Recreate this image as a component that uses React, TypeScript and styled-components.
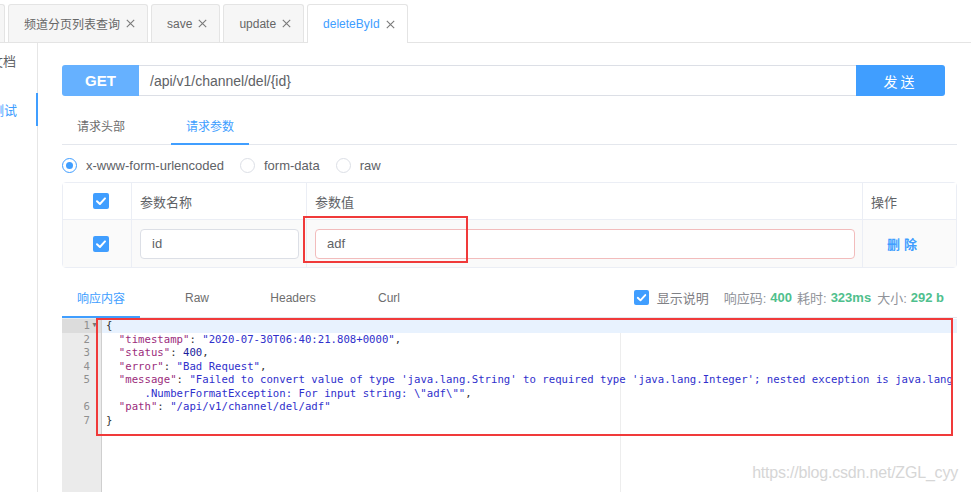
import React from "react";
import styled, { createGlobalStyle } from "styled-components";

const GlobalStyle = createGlobalStyle`
  html, body { margin: 0; padding: 0; background: #fff; }
  body { font-family: "Liberation Sans", "Noto Sans CJK SC", sans-serif; color: #606266; }
  * { box-sizing: border-box; }
`;

const Page = styled.div`
  width: 971px;
  height: 492px;
  overflow: hidden;
  position: relative;
  display: flex;
  flex-direction: column;
`;

const TabStrip = styled.div`
  height: 43px;
  flex: none;
  display: flex;
  align-items: flex-end;
  gap: 3px;
  border-bottom: 1px solid #e4e4e4;
`;

const DocTab = styled.div<{ $active?: boolean; $cut?: boolean }>`
  height: ${(p) => (p.$active ? 39 : 38)}px;
  margin-bottom: ${(p) => (p.$active ? -1 : 0)}px;
  margin-left: ${(p) => (p.$cut ? -95 : 0)}px;
  width: ${(p) => (p.$cut ? "100px" : "auto")};
  flex: none;
  display: flex;
  align-items: center;
  gap: 6px;
  padding: 0 12px 0 15px;
  border: 1px solid #e4e4e4;
  border-bottom: none;
  border-radius: 3px 3px 0 0;
  background: ${(p) => (p.$active ? "#fff" : "#f6f6f6")};
  color: ${(p) => (p.$active ? "#409eff" : "#666")};
  font-size: 12px;
  white-space: nowrap;
  overflow: hidden;
`;

const Body = styled.div`
  flex: 1;
  display: flex;
  min-height: 0;
`;

const Sidebar = styled.div`
  width: 38px;
  flex: none;
  border-right: 1px solid #e6e6e6;
  padding-top: 1px;
  display: flex;
  flex-direction: column;
  gap: 16px;
`;

const SideItem = styled.div<{ $active?: boolean }>`
  height: 33px;
  display: flex;
  align-items: center;
  justify-content: flex-end;
  padding-right: ${(p) => (p.$active ? 19 : 21)}px;
  margin-right: ${(p) => (p.$active ? -1 : 0)}px;
  overflow: hidden;
  white-space: nowrap;
  font-size: 13px;
  color: ${(p) => (p.$active ? "#409eff" : "#606266")};
  border-right: ${(p) => (p.$active ? "2px solid #409eff" : "none")};
`;

const Main = styled.div`
  flex: 1;
  min-width: 0;
  display: flex;
  flex-direction: column;
  padding: 0 14px 0 24px;
`;

const UrlBar = styled.div`
  margin-top: 22px;
  margin-right: 12px;
  height: 31px;
  flex: none;
  display: flex;
`;

const Method = styled.div`
  width: 77px;
  background: #66b1ff;
  color: #fff;
  font-weight: bold;
  font-size: 15px;
  border-radius: 3px 0 0 3px;
  display: flex;
  align-items: center;
  justify-content: center;
`;

const UrlInput = styled.div`
  flex: 1;
  border-top: 1px solid #dcdfe6;
  border-bottom: 1px solid #dcdfe6;
  padding-left: 11px;
  display: flex;
  align-items: center;
  font-size: 14px;
  color: #606266;
`;

const SendButton = styled.div`
  width: 89px;
  background: #409eff;
  color: #fff;
  font-size: 14px;
  letter-spacing: 3px;
  border-radius: 0 3px 3px 0;
  display: flex;
  align-items: center;
  justify-content: center;
`;

const TabBar = styled.div<{ $gap: number; $top: number; $pad: number }>`
  margin-top: ${(p) => p.$top}px;
  height: ${(p) => 35 + (p.$pad > 3 ? 1 : 0)}px;
  flex: none;
  display: flex;
  gap: ${(p) => p.$gap}px;
  border-bottom: 1px solid #e4e7ed;
`;

const TabItem = styled.div<{ $active?: boolean; $pad: number }>`
  width: 78px;
  position: relative;
  display: flex;
  align-items: center;
  justify-content: center;
  padding-bottom: ${(p) => p.$pad}px;
  font-size: 12px;
  color: ${(p) => (p.$active ? "#409eff" : "#6e6e6e")};
  &::after {
    content: "";
    display: ${(p) => (p.$active ? "block" : "none")};
    position: absolute;
    left: 0;
    right: 0;
    bottom: -1px;
    height: 2px;
    background: #409eff;
  }
`;

const RadioRow = styled.div`
  height: 37px;
  flex: none;
  padding-top: 3px;
  display: flex;
  align-items: center;
  font-size: 13px;
  color: #606266;
`;

const RadioOption = styled.label`
  display: flex;
  align-items: center;
  gap: 9px;
  margin-right: 16px;
`;

const RadioCircle = styled.span<{ $checked?: boolean }>`
  width: 15px;
  height: 15px;
  border-radius: 50%;
  border: 1px solid ${(p) => (p.$checked ? "#409eff" : "#dcdfe6")};
  display: flex;
  align-items: center;
  justify-content: center;
  &::after {
    content: "";
    width: 7px;
    height: 7px;
    border-radius: 50%;
    background: ${(p) => (p.$checked ? "#409eff" : "transparent")};
  }
`;

const Table = styled.div`
  position: relative;
  flex: none;
  border: 1px solid #ebeef5;
  border-radius: 4px;
`;

const TableRow = styled.div<{ $height: number; $shade?: boolean; $line?: boolean }>`
  display: grid;
  grid-template-columns: 69px 175px 1fr 93px;
  height: ${(p) => p.$height}px;
  background: ${(p) => (p.$shade ? "#fafafa" : "#fff")};
  border-bottom: ${(p) => (p.$line ? "1px solid #ebeef5" : "none")};
`;

const Cell = styled.div<{ $last?: boolean; $center?: boolean }>`
  display: flex;
  align-items: center;
  padding: 0 7px 0 8px;
  border-right: ${(p) => (p.$last ? "none" : "1px solid #ebeef5")};
  font-size: 13px;
  color: #606266;
`;

const CheckCell = styled(Cell)`
  padding-left: 30px;
`;

const CheckBox = styled.span<{ $size: number }>`
  width: ${(p) => p.$size}px;
  height: ${(p) => p.$size}px;
  border-radius: 2px;
  background: #409eff;
  display: inline-flex;
  align-items: center;
  justify-content: center;
  flex: none;
`;

const TextInput = styled.div<{ $error?: boolean }>`
  flex: 1;
  height: 30px;
  border: 1px solid ${(p) => (p.$error ? "#f2bcbc" : "#dcdfe6")};
  border-radius: 4px;
  background: #fff;
  padding-left: 11px;
  display: flex;
  align-items: center;
  font-size: 13px;
  color: #606266;
`;

const DeleteLink = styled.span`
  margin-left: 16px;
  color: #409eff;
  font-size: 13px;
  letter-spacing: 4px;
  font-weight: bold;
`;

const Mark = styled.div`
  position: absolute;
  border: 2px solid #f03a3a;
  pointer-events: none;
`;

const Stats = styled.div`
  margin-left: auto;
  display: flex;
  align-items: center;
  padding: 0 13px 4px 0;
  font-size: 13px;
  color: #909399;
`;

const StatLabel = styled.span<{ $gap: number }>`
  margin-left: ${(p) => p.$gap}px;
  color: ${(p) => (p.$gap === 8 ? "#7f8186" : "#909399")};
`;

const StatValue = styled.span`
  margin-left: 4px;
  color: #4fc08d;
  font-weight: bold;
`;

const Editor = styled.div`
  flex: 1;
  min-height: 0;
  position: relative;
  display: flex;
  font-family: "DejaVu Sans Mono", monospace;
  font-size: 10.67px;
  line-height: 13.5px;
`;

const Gutter = styled.div`
  width: 40px;
  flex: none;
  background: #ebebeb;
  border-right: 1px solid #cfcfcf;
  padding-top: 1px;
  color: #8f8f8f;
`;

const GutterCell = styled.div<{ $active?: boolean }>`
  height: 13.5px;
  display: flex;
  justify-content: flex-end;
  align-items: center;
  padding-right: 2px;
  background: ${(p) => (p.$active ? "#dcdcdc" : "transparent")};
`;

const Fold = styled.span`
  width: 9px;
  text-align: center;
  font-size: 7px;
  color: #777;
`;

const Code = styled.div`
  flex: 1;
  position: relative;
  padding-top: 1px;
  overflow: hidden;
  color: #333;
`;

const PrintMargin = styled.div`
  position: absolute;
  top: 0;
  bottom: 0;
  left: 518px;
  width: 1px;
  background: #ededed;
`;

const CodeLine = styled.div<{ $active?: boolean }>`
  position: relative;
  height: 13.5px;
  padding-left: 4px;
  white-space: pre;
  background: ${(p) => (p.$active ? "#e8f2fe" : "transparent")};
`;

const Tok = styled.span<{ $kind: string }>`
  color: ${(p) =>
    p.$kind === "k" ? "#9b2c7c" : p.$kind === "s" ? "#3030cc" : p.$kind === "n" ? "#1c1c9c" : "#333"};
`;

const Watermark = styled.div`
  position: absolute;
  right: 13px;
  bottom: 10px;
  font-size: 16px;
  letter-spacing: -0.2px;
  color: #d6d6d6;
  text-shadow: 0 0 1px rgba(255, 255, 255, 0.8);
`;

const CloseIcon = () => (
  <svg width="9" height="9" viewBox="0 0 9 9">
    <path d="M0.8 0.8 L8.2 8.2 M8.2 0.8 L0.8 8.2" stroke="#7a7a7a" strokeWidth="1.1" fill="none" />
  </svg>
);

const Check = ({ size }: { size: number }) => (
  <CheckBox $size={size}>
    <svg width={size} height={size} viewBox="0 0 16 16">
      <path d="M4 8.3 L6.9 11 L12 5.4" stroke="#fff" strokeWidth="2" fill="none" strokeLinecap="round" strokeLinejoin="round" />
    </svg>
  </CheckBox>
);

type Part = [string, string];
const codeLines: { n: number | null; parts: Part[] }[] = [
  { n: 1, parts: [["p", "{"]] },
  { n: 2, parts: [["p", "  "], ["k", '"timestamp"'], ["p", ": "], ["s", '"2020-07-30T06:40:21.808+0000"'], ["p", ","]] },
  { n: 3, parts: [["p", "  "], ["k", '"status"'], ["p", ": "], ["n", "400"], ["p", ","]] },
  { n: 4, parts: [["p", "  "], ["k", '"error"'], ["p", ": "], ["s", '"Bad Request"'], ["p", ","]] },
  {
    n: 5,
    parts: [
      ["p", "  "],
      ["k", '"message"'],
      ["p", ": "],
      ["s", "\"Failed to convert value of type 'java.lang.String' to required type 'java.lang.Integer'; nested exception is java.lang"],
    ],
  },
  { n: null, parts: [["p", "      "], ["s", '.NumberFormatException: For input string: \\"adf\\""'], ["p", ","]] },
  { n: 6, parts: [["p", "  "], ["k", '"path"'], ["p", ": "], ["s", '"/api/v1/channel/del/adf"']] },
  { n: 7, parts: [["p", "}"]] },
];

export default function App() {
  return (
    <Page>
      <GlobalStyle />
      <TabStrip>
        <DocTab $cut />
        <DocTab>
          频道分页列表查询 <CloseIcon />
        </DocTab>
        <DocTab>
          save <CloseIcon />
        </DocTab>
        <DocTab>
          update <CloseIcon />
        </DocTab>
        <DocTab $active>
          deleteById <CloseIcon />
        </DocTab>
      </TabStrip>
      <Body>
        <Sidebar>
          <SideItem>文档</SideItem>
          <SideItem $active>测试</SideItem>
        </Sidebar>
        <Main>
          <UrlBar>
            <Method>GET</Method>
            <UrlInput>/api/v1/channel/del/{"{id}"}</UrlInput>
            <SendButton>发送</SendButton>
          </UrlBar>
          <TabBar $gap={31} $top={14} $pad={3}>
            <TabItem $pad={3}>请求头部</TabItem>
            <TabItem $pad={3} $active>
              请求参数
            </TabItem>
          </TabBar>
          <RadioRow>
            <RadioOption>
              <RadioCircle $checked />
              x-www-form-urlencoded
            </RadioOption>
            <RadioOption>
              <RadioCircle />
              form-data
            </RadioOption>
            <RadioOption>
              <RadioCircle />
              raw
            </RadioOption>
          </RadioRow>
          <Table>
            <TableRow $height={37} $line>
              <CheckCell>
                <Check size={16} />
              </CheckCell>
              <Cell>参数名称</Cell>
              <Cell>参数值</Cell>
              <Cell $last>操作</Cell>
            </TableRow>
            <TableRow $height={47} $shade>
              <CheckCell>
                <Check size={16} />
              </CheckCell>
              <Cell>
                <TextInput>id</TextInput>
              </Cell>
              <Cell>
                <TextInput $error>adf</TextInput>
              </Cell>
              <Cell $last>
                <DeleteLink>删除</DeleteLink>
              </Cell>
            </TableRow>
            <Mark style={{ left: 240, top: 33, width: 165, height: 47 }} />
          </Table>
          <TabBar $gap={18} $top={14} $pad={4}>
            <TabItem $pad={4} $active>
              响应内容
            </TabItem>
            <TabItem $pad={4}>Raw</TabItem>
            <TabItem $pad={4}>Headers</TabItem>
            <TabItem $pad={4}>Curl</TabItem>
            <Stats>
              <Check size={15} />
              <StatLabel $gap={8}>显示说明</StatLabel>
              <StatLabel $gap={15}>响应码:</StatLabel>
              <StatValue>400</StatValue>
              <StatLabel $gap={5}>耗时:</StatLabel>
              <StatValue>323ms</StatValue>
              <StatLabel $gap={6}>大小:</StatLabel>
              <StatValue>292 b</StatValue>
            </Stats>
          </TabBar>
          <Editor>
            <Gutter>
              {codeLines.map((l, i) => (
                <GutterCell key={i} $active={i === 0}>
                  {l.n ?? ""}
                  <Fold>{i === 0 ? "▼" : ""}</Fold>
                </GutterCell>
              ))}
            </Gutter>
            <Code>
              <PrintMargin />
              {codeLines.map((l, i) => (
                <CodeLine key={i} $active={i === 0}>
                  {l.parts.map(([k, t], j) => (
                    <Tok key={j} $kind={k}>
                      {t}
                    </Tok>
                  ))}
                </CodeLine>
              ))}
            </Code>
            <Mark style={{ left: 34, top: 0, width: 857, height: 118 }} />
          </Editor>
        </Main>
      </Body>
      <Watermark>https://blog.csdn.net/ZGL_cyy</Watermark>
    </Page>
  );
}
